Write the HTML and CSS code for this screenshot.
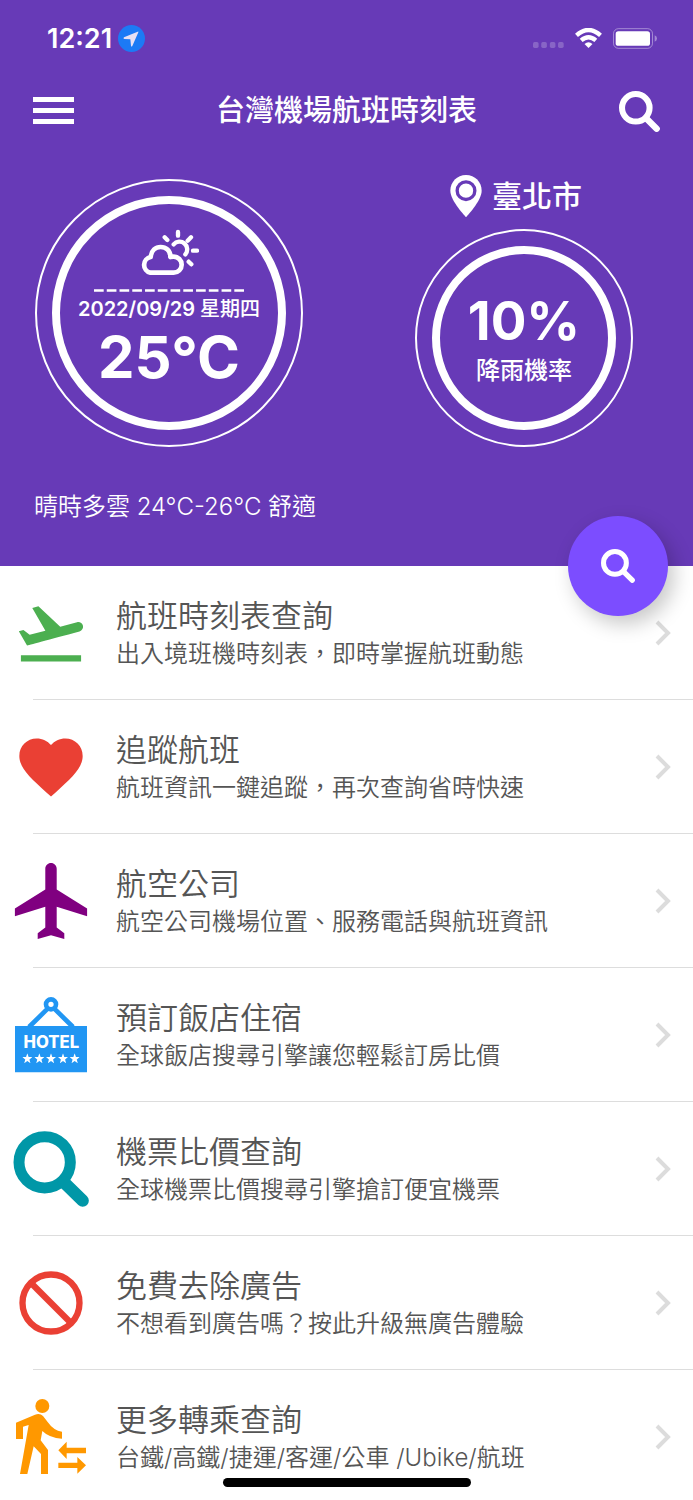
FILE: index.html
```html
<!DOCTYPE html>
<html lang="zh-Hant">
<head>
<meta charset="utf-8">
<meta name="viewport" content="width=device-width, initial-scale=1">
<title>台灣機場航班時刻表</title>
<link rel="stylesheet" href="styles.css">
</head>
<body>
<svg class="defs" aria-hidden="true">
  <symbol id="search" viewBox="0 0 122 122">
    <circle cx="50" cy="50" r="41" fill="none" stroke="currentColor" stroke-width="18"/>
    <path d="M80 80l32 32" stroke="currentColor" stroke-width="19" stroke-linecap="round"/>
  </symbol>
  <symbol id="chevron" viewBox="0 0 16 26">
    <path d="M2 2l11 11L2 24" fill="none" stroke="currentColor" stroke-width="4"/>
  </symbol>
  <symbol id="star" viewBox="0 0 24 24">
    <path d="M12 0l3.1 8.6 9 .3-7.100 5.600 2.500 9L12 18.300 4.500 23.500l2.500-9L-.1 8.900l9-.3z" fill="#fff"/>
  </symbol>
</svg>
<div class="app">
  <header class="header">
    <div class="status">
      <div class="status-side">
        <span class="clock">12:21</span>
        <svg class="location" viewBox="0 0 81 81"><circle cx="40.500" cy="40.500" r="40.500" fill="#1c7af5"/><path d="M59 20L18 37q-4 4 1 5l18 1 2 19q1 5 4 1L61 22q1-3-2-2z" fill="#e8e0f4"/></svg>
      </div>
      <div class="status-side status-right">
        <svg class="signal" viewBox="0 0 94 18" fill="#fff" fill-opacity=".22"><rect width="17" height="18" rx="5"/><rect x="25" width="17" height="18" rx="5"/><rect x="51" width="17" height="18" rx="5"/><rect x="76" width="17" height="18" rx="5"/></svg>
        <svg class="wifi" viewBox="0 0 80 60" fill="none" stroke="#fff" stroke-width="13"><path d="M4 22Q40-10 76 22"/><path d="M18 37Q40 18 62 37"/><path d="M28 48Q40 38 52 48L40 60z" fill="#fff" stroke="none"/></svg>
        <svg class="battery" viewBox="0 0 132 62"><rect x="1.500" y="1.500" width="117" height="59" rx="15" fill="none" stroke="#fff" stroke-opacity=".4" stroke-width="3"/><rect x="8" y="9" width="103" height="44" rx="8" fill="#fff"/><path d="M125 21q7 3 7 10t-7 10z" fill="#fff" fill-opacity=".4"/></svg>
      </div>
    </div>
    <nav class="nav">
      <button class="icon-btn" aria-label="選單"><svg class="menu" viewBox="0 0 41 28" fill="#fff"><path d="M0 0h41v5H0zM0 11h41v5H0zM0 22h41v5H0z"/></svg></button>
      <h1 class="title">台灣機場航班時刻表</h1>
      <button class="icon-btn" aria-label="搜尋"><svg class="nav-search"><use href="#search"/></svg></button>
    </nav>
    <section class="weather">
      <div class="ring ring-large">
        <div class="ring-inner">
          <svg class="cloud" viewBox="0 0 180 138" fill="none" stroke="#fff" stroke-width="13" stroke-linecap="round" stroke-linejoin="round">
            <path d="M34 131h70a24 24 0 0 0 0-48q-6 0-10 1C95 64 80 54 65 54S37 64 35 84a24 24 0 0 0-1 47z" stroke-width="14"/>
            <path d="M104 46a23 23 0 0 1 35 30"/>
            <path d="M117 9v11M146 35l10-10M77 25l8 8M162 65h12M149 98l8 8"/>
          </svg>
          <svg class="dashes" viewBox="0 0 449 8"><path d="M0 4h449" stroke="#fff" stroke-width="8" stroke-dasharray="29 9.180"/></svg>
          <p class="date">2022/09/29 <span class="weekday">星期四</span></p>
          <p class="temp">25°C</p>
        </div>
      </div>
      <div class="rain">
        <p class="city">
          <svg class="pin" viewBox="0 0 94 126"><path d="M47 0C20 0 0 21 0 47c0 31 47 79 47 79s47-48 47-79C94 21 74 0 47 0z" fill="#fff"/><circle cx="47" cy="47" r="26.500" fill="#fff" stroke="#673ab7" stroke-width="10"/></svg>
          <span>臺北市</span>
        </p>
        <div class="ring ring-small">
          <div class="ring-inner">
            <p class="chance">10%</p>
            <p class="chance-label">降雨機率</p>
          </div>
        </div>
      </div>
    </section>
    <p class="summary">晴時多雲 24°C-26°C 舒適</p>
    <button class="fab" aria-label="查詢航班"><svg class="fab-search"><use href="#search"/></svg></button>
  </header>
  <main class="list">
    <a class="row" href="#schedule">
      <svg class="row-icon" viewBox="0 0 24 24" fill="#4caf50"><path d="M2.500 19h19v2h-19zm19.570-9.360c-.21-.8-1.040-1.280-1.840-1.060L14.920 10l-6.900-6.430-1.930.51 4.140 7.170-4.970 1.330-1.970-1.540-1.450.39 2.590 4.490s7.120-1.900 16.570-4.430c.81-.23 1.280-1.050 1.070-1.850z"/></svg>
      <span class="row-text"><span class="row-title">航班時刻表查詢</span><span class="row-sub">出入境班機時刻表，即時掌握航班動態</span></span>
      <svg class="chevron"><use href="#chevron"/></svg>
    </a>
    <a class="row" href="#track">
      <svg class="row-icon" viewBox="0 0 24 24" fill="#ea4034"><path d="M12 21.350l-1.450-1.320C5.400 15.360 2 12.280 2 8.500 2 5.420 4.420 3 7.500 3c1.740 0 3.410.81 4.500 2.090C13.090 3.810 14.760 3 16.500 3 19.580 3 22 5.420 22 8.500c0 3.780-3.400 6.860-8.550 11.540z"/></svg>
      <span class="row-text"><span class="row-title">追蹤航班</span><span class="row-sub">航班資訊一鍵追蹤，再次查詢省時快速</span></span>
      <svg class="chevron"><use href="#chevron"/></svg>
    </a>
    <a class="row" href="#airlines">
      <svg class="row-icon" viewBox="1.500 2 20 20" fill="#800080"><path d="M21 16v-2l-8-5V3.500c0-.83-.67-1.500-1.500-1.500S10 2.670 10 3.500V9l-8 5v2l8-2.500V19l-2 1.500V22l3.500-1 3.500 1v-1.500L13 19v-5.500z"/></svg>
      <span class="row-text"><span class="row-title">航空公司</span><span class="row-sub">航空公司機場位置、服務電話與航班資訊</span></span>
      <svg class="chevron"><use href="#chevron"/></svg>
    </a>
    <a class="row" href="#hotels">
      <svg class="row-icon" viewBox="0 0 228 228">
        <path d="M6 87h216v139H6z" fill="#2196f3"/>
        <path d="M48 90l56-55M180 90l-56-55" stroke="#2196f3" stroke-width="14"/>
        <circle cx="114" cy="22" r="15" fill="#fff" stroke="#2196f3" stroke-width="14"/>
        <text class="hotel-text" x="115" y="154" text-anchor="middle">HOTEL</text>
        <use href="#star" x="28" y="169" width="30" height="30"/><use href="#star" x="64" y="169" width="30" height="30"/><use href="#star" x="99" y="169" width="30" height="30"/><use href="#star" x="135" y="169" width="30" height="30"/><use href="#star" x="170" y="169" width="30" height="30"/>
      </svg>
      <span class="row-text"><span class="row-title">預訂飯店住宿</span><span class="row-sub">全球飯店搜尋引擎讓您輕鬆訂房比價</span></span>
      <svg class="chevron"><use href="#chevron"/></svg>
    </a>
    <a class="row" href="#fares">
      <svg class="row-icon" viewBox="0 0 228 228" fill="none" stroke="#0097a7"><circle cx="95" cy="94" r="77" stroke-width="33"/><path d="M153 154l56 55" stroke-width="37" stroke-linecap="round"/></svg>
      <span class="row-text"><span class="row-title">機票比價查詢</span><span class="row-sub">全球機票比價搜尋引擎搶訂便宜機票</span></span>
      <svg class="chevron"><use href="#chevron"/></svg>
    </a>
    <a class="row" href="#remove-ads">
      <svg class="row-icon" viewBox="0 0 24 24" fill="none" stroke="#ea4034" stroke-width="2"><circle cx="12" cy="12" r="9"/><path d="M5.300 5.300l13.400 13.400"/></svg>
      <span class="row-text"><span class="row-title">免費去除廣告</span><span class="row-sub">不想看到廣告嗎？按此升級無廣告體驗</span></span>
      <svg class="chevron"><use href="#chevron"/></svg>
    </a>
    <a class="row" href="#transfer">
      <svg class="row-icon" viewBox="0 0 228 228" fill="#ff9800"><circle cx="88" cy="21" r="21"/><path d="M9 71L66 47q15-5 24 4l14 18q18 26 43 29v21q-38-2-59-23l-5 28 22 29v72H84v-60L62 142 43 225H21L47 78l-17 5v37H9z"/><path d="M136 154l25-26v18h58v17h-58v17zM136 191h57v-17l26 25-26 25v-17h-57z"/></svg>
      <span class="row-text"><span class="row-title">更多轉乘查詢</span><span class="row-sub">台鐵/高鐵/捷運/客運/公車 /Ubike/航班</span></span>
      <svg class="chevron"><use href="#chevron"/></svg>
    </a>
  </main>
  <div class="home-indicator"></div>
</div>
</body>
</html>
```
FILE: styles.css
```css
* { box-sizing: border-box; }
body, p, h1 { margin: 0; }
body {
  font-family: Inter, "Noto Sans CJK TC", sans-serif;
  background: #fff;
}
button { border: 0; padding: 0; background: none; color: inherit; cursor: pointer; }
svg { display: block; flex: none; }
.defs { position: absolute; width: 0; height: 0; }

.app {
  position: relative;
  display: flex;
  flex-direction: column;
  height: 100vh;
  overflow: hidden;
}

.header {
  position: relative;
  flex: none;
  background: #673ab7;
  color: #fff;
}
.status {
  display: flex;
  justify-content: space-between;
  height: 76px;
  padding: 0 36px 0 47px;
}
.status-side { display: flex; align-items: center; gap: 6px; }
.status-right { gap: 11px; }
.clock { font-size: 27px; font-weight: 600; }
.location { width: 27px; height: 27px; }
.signal { width: 31px; height: 6px; margin-top: 13px; }
.wifi { width: 27px; height: 20px; }
.battery { width: 44px; height: 21px; }

.nav {
  display: flex;
  align-items: center;
  justify-content: space-between;
  height: 70px;
  padding: 0 33px;
}
.icon-btn { display: flex; }
.menu { width: 41px; height: 28px; }
.nav-search { width: 41px; height: 41px; }
.title { font-size: 29px; font-weight: 500; line-height: 40px; }

.weather {
  display: flex;
  align-items: flex-end;
  justify-content: space-between;
  padding: 28px 60px 0 35px;
}
.ring {
  padding: 15px;
  border: 2px solid #fff;
  border-radius: 50%;
}
.ring-large { width: 268px; height: 268px; }
.ring-small { width: 218px; height: 218px; }
.ring-inner {
  display: flex;
  flex-direction: column;
  align-items: center;
  height: 100%;
  border: 8px solid #fff;
  border-radius: 50%;
  white-space: nowrap;
}
.cloud { width: 60px; height: 46px; margin-top: 25px; }
.dashes { width: 150px; height: 3px; margin-top: 14px; }
.date { margin-top: 3px; font-size: 20px; font-weight: 600; line-height: 28px; }
.weekday { font-weight: 500; }
.temp { font-size: 58px; font-weight: 700; line-height: 68px; }
.rain { display: flex; flex-direction: column; align-items: center; gap: 11px; }
.city {
  display: flex;
  align-items: center;
  gap: 10px;
  padding-right: 16px;
  font-size: 30px;
  font-weight: 500;
  line-height: 44px;
}
.pin { width: 32px; height: 42px; }
.chance { margin-top: 33px; font-size: 53px; font-weight: 700; line-height: 68px; }
.chance-label { font-size: 24px; font-weight: 500; line-height: 32px; }
.summary { padding: 42px 34px 41px; font-size: 24px; font-weight: 350; line-height: 36px; }

.fab {
  position: absolute;
  right: 25px;
  bottom: -50px;
  z-index: 1;
  display: flex;
  align-items: center;
  justify-content: center;
  width: 100px;
  height: 100px;
  border-radius: 50%;
  background: #7c4dff;
  box-shadow: 6px 8px 20px rgba(0, 0, 0, .22);
}
.fab-search { width: 34px; height: 34px; }

.list { flex: 1; min-height: 0; overflow-y: auto; scrollbar-width: none; }
.row {
  display: flex;
  align-items: center;
  padding: 0 22px 0 13px;
  height: 134px;
  color: #555;
  text-decoration: none;
  background: linear-gradient(#ddd, #ddd) 33px 100% / 100% 1px no-repeat;
}
.row-icon { width: 76px; height: 76px; }
.row-text { flex: 1; display: flex; flex-direction: column; padding: 4px 0 0 27px; }
.row-title { font-size: 31px; font-weight: 350; line-height: 38px; }
.row-sub { font-size: 24px; font-weight: 350; line-height: 38px; }
.chevron { width: 16px; height: 26px; color: #dcdcdc; }
.hotel-text { font: 800 50px Inter, sans-serif; fill: #fff; }

.home-indicator {
  position: absolute;
  left: 50%;
  bottom: 13px;
  width: 248px;
  height: 9px;
  border-radius: 5px;
  background: #000;
  transform: translateX(-50%);
}
```
